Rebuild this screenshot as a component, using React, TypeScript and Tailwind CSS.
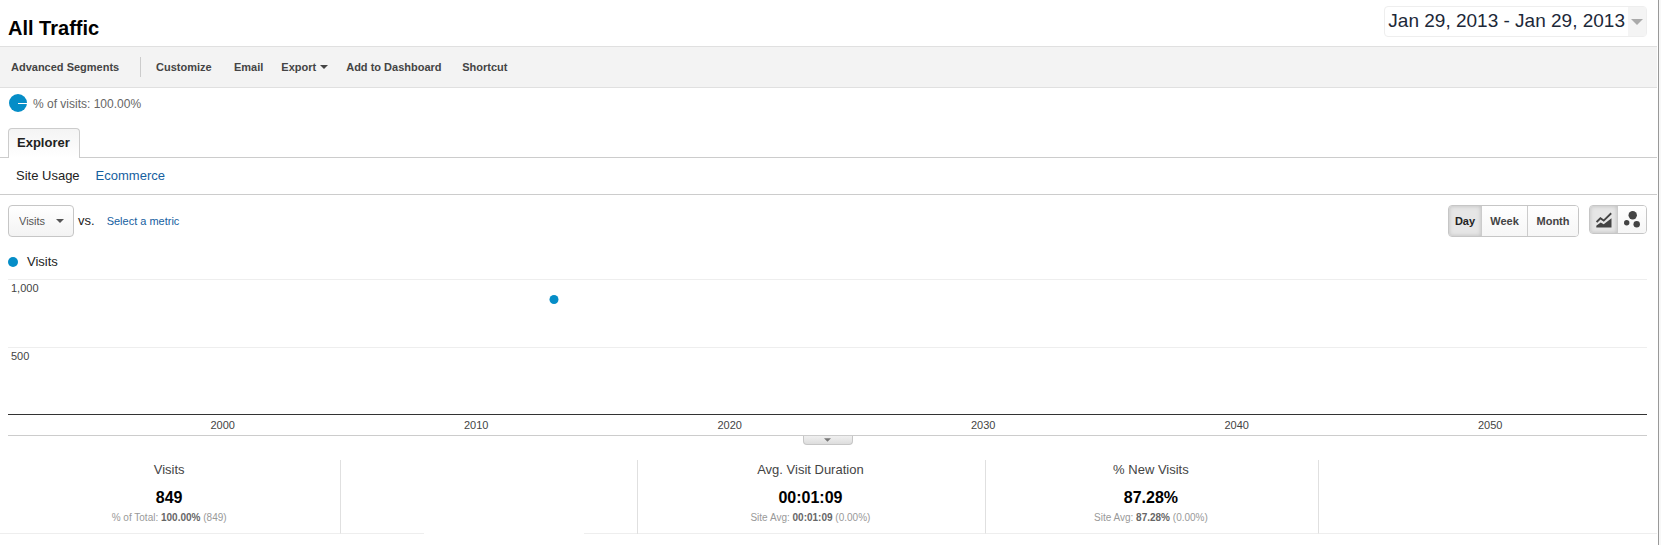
import React, { useState } from 'react';

interface Metric {
  label: string;
  value: string;
  prefix: string;
  average: string;
  suffix: string;
}

const YEARS = [2000, 2010, 2020, 2030, 2040, 2050];
const AXIS_MAX = 1000;
const POINT = { position: 33.3, visits: 849 };

const VISITS: Metric = { label: 'Visits', value: '849', prefix: '% of Total:', average: '100.00%', suffix: '(849)' };
const DURATION: Metric = { label: 'Avg. Visit Duration', value: '00:01:09', prefix: 'Site Avg:', average: '00:01:09', suffix: '(0.00%)' };
const NEW_VISITS: Metric = { label: '% New Visits', value: '87.28%', prefix: 'Site Avg:', average: '87.28%', suffix: '(0.00%)' };

const Caret: React.FC<{ className?: string }> = ({ className }) => (
  <svg viewBox="0 0 8 4" className={className} aria-hidden="true">
    <path d="M0 0h8L4 4z" fill="currentColor" />
  </svg>
);

const MetricSummary: React.FC<{ metric: Metric }> = ({ metric }) => (
  <div className="pr-0.5 text-center">
    <div className="text-[13px] leading-5 text-[#444]">{metric.label}</div>
    <div className="mt-2 text-base leading-5 font-bold text-black">{metric.value}</div>
    <div className="mt-1 text-[10px] leading-3 text-[#999]">
      {metric.prefix} <b className="text-[#666]">{metric.average}</b> {metric.suffix}
    </div>
  </div>
);

const Header: React.FC = () => (
  <header className="flex h-[46px] items-start justify-between pr-2.5 pl-2">
    <h1 className="pt-4 text-xl leading-6 font-bold text-black">All Traffic</h1>
    <button type="button" className="mt-1.5 flex h-[31px] items-stretch rounded border border-[#eee] pl-[3px] text-[19px] leading-7 text-[#1c2838]">
      <span>Jan 29, 2013 - Jan 29, 2013</span>
      <span className="ml-[3px] flex w-[18px] items-center justify-center bg-[#f4f4f4] text-[#aaa]">
        <Caret className="h-1.5 w-3" />
      </span>
    </button>
  </header>
);

const Toolbar: React.FC = () => (
  <nav className="flex h-[42px] items-center border-y border-[#e0e0e0] bg-[#f3f3f3] pl-[11px] text-[11px] font-bold text-[#444]">
    <button type="button" className="w-[114px] text-left">Advanced Segments</button>
    <span className="mx-[15px] h-5 w-px bg-[#ccc]" />
    <button type="button" className="w-[60px] text-left">Customize</button>
    <button type="button" className="ml-[18px]">Email</button>
    <button type="button" className="ml-[18px] flex items-center gap-1">
      Export
      <Caret className="h-1 w-2" />
    </button>
    <button type="button" className="ml-[18px] w-[98px] text-left">Add to Dashboard</button>
    <button type="button" className="ml-[18px]">Shortcut</button>
  </nav>
);

const App: React.FC = () => {
  const [metric, setMetric] = useState('visits');
  const [period, setPeriod] = useState('Day');

  const periodClass = (name: string) =>
    period === name
      ? 'bg-[#e6e6e6] text-[#222] shadow-[inset_0_0_4px_#bbb]'
      : 'bg-linear-to-b from-white to-[#f6f6f6] text-[#444]';

  return (
    <div className="flex min-h-screen bg-white font-['Liberation_Sans',Arial,sans-serif]">
      <main className="min-w-0 flex-1">
        <Header />
        <Toolbar />

        <div className="flex h-10 items-start gap-[6px] pt-1.5 pl-[9px] text-xs leading-5 text-[#666]">
          <svg viewBox="0 0 18 18" className="h-[18px] w-[18px]" aria-hidden="true">
            <circle cx="9" cy="9" r="9" fill="#058dc7" />
            <path d="M9 9.5h9" stroke="#fff" />
          </svg>
          <span>% of visits: 100.00%</span>
        </div>

        <div className="flex border-b border-[#ccc] pl-2">
          <a href="#explorer" className="-mb-px h-[30px] rounded-t-sm border border-b-0 border-[#ccc] bg-linear-to-b from-[#f4f4f4] to-white pr-[9px] pl-2 text-[13px] leading-7 font-bold text-[#222]">
            Explorer
          </a>
        </div>
        <nav className="flex h-[37px] gap-4 border-b border-[#ccc] pl-4 text-[13px] leading-9">
          <a href="#usage" className="text-[#222]">Site Usage</a>
          <a href="#ecommerce" className="text-[#15609f]">Ecommerce</a>
        </nav>

        <section className="pt-2.5 pr-2.5 pl-2">
          <div className="flex items-start justify-between">
            <div className="flex h-8 items-center">
              <div className="relative h-8">
                <select
                  aria-label="Primary metric"
                  value={metric}
                  onChange={e => setMetric(e.target.value)}
                  className="h-8 w-[66px] appearance-none rounded-sm border border-[#c6c6c6] bg-linear-to-b from-white to-[#f3f3f3] pl-2.5 text-[11px] text-[#555]"
                >
                  <option value="visits">Visits</option>
                </select>
                <Caret className="pointer-events-none absolute top-3.5 right-2.5 h-1 w-2 text-[#555]" />
              </div>
              <span className="ml-1 text-[13px] leading-4 text-[#222]">vs.</span>
              <a href="#metric" className="ml-3 text-[11px] leading-4 text-[#15609f]">Select a metric</a>
            </div>

            <div className="flex items-start gap-2.5">
              <div className="flex h-8 divide-x divide-[#ccc] overflow-hidden rounded-sm border border-[#c6c6c6] text-[11px] font-bold">
                <button type="button" onClick={() => setPeriod('Day')} className={`w-[33px] ${periodClass('Day')}`}>Day</button>
                <button type="button" onClick={() => setPeriod('Week')} className={`w-[46px] ${periodClass('Week')}`}>Week</button>
                <button type="button" onClick={() => setPeriod('Month')} className={`w-[50px] ${periodClass('Month')}`}>Month</button>
              </div>
              <div className="flex h-[29px] overflow-hidden rounded-sm border border-[#c6c6c6] text-[#444]">
                <button type="button" aria-label="Line chart" className="flex w-7 items-center justify-center border-r border-[#ccc] bg-[#e6e6e6] shadow-[inset_0_0_4px_#bbb]">
                  <svg viewBox="0 0 16 16" className="h-4 w-4" aria-hidden="true">
                    <path d="M.3 15.500v-1.700l4.400-3.400 3 1.900 7.800-6v9.200z" fill="currentColor" />
                    <path d="M.6 10 4.400 6.300l3.300 2.300L15.200 1.200" fill="none" stroke="currentColor" strokeWidth="1.900" />
                  </svg>
                </button>
                <button type="button" aria-label="Motion chart" className="flex w-7 items-center justify-center bg-linear-to-b from-white to-[#f6f6f6]">
                  <svg viewBox="0 0 16 17" className="h-[17px] w-4" aria-hidden="true">
                    <circle cx="8.700" cy="4.200" r="4.200" fill="currentColor" />
                    <circle cx="2.700" cy="11.800" r="2.700" fill="currentColor" />
                    <circle cx="12.700" cy="13.300" r="3.200" fill="currentColor" />
                  </svg>
                </button>
              </div>
            </div>
          </div>

          <div className="mt-4 mb-2 flex items-center gap-[9px] text-[13px] leading-[18px] text-[#222]">
            <span className="h-2.5 w-2.5 rounded-full bg-[#058dc7]" />
            Visits
          </div>

          {/* plot area */}
          <div className="relative text-[11px] leading-4 text-[#444]">
            <div className="h-[68px] border-t border-[#eee] pl-[3px]">1,000</div>
            <div className="h-[67px] border-t border-[#eee] pl-[3px]">500</div>
            <span
              className="absolute -mb-[5px] h-[9px] w-[9px] -translate-x-1/2 rounded-full bg-[#058dc7]"
              style={{ left: `${POINT.position}%`, bottom: `${(POINT.visits / AXIS_MAX) * 100}%` }}
            />
          </div>
          <div className="flex h-[21px] border-t border-[#333] pr-[30px] pl-[88px] text-[11px] leading-5 text-[#444]">
            {YEARS.map(year => (
              <span key={year} className="flex-1 text-center">{year}</span>
            ))}
          </div>
          <div className="flex h-[25px] items-start justify-center border-t border-[#ccc]">
            <button type="button" aria-label="Expand chart" className="flex h-[9px] w-[50px] items-center justify-center rounded-b-sm border border-t-0 border-[#c6c6c6] bg-linear-to-b from-[#f0f0f0] to-[#ddd] text-[#777]">
              <Caret className="h-1 w-[7px]" />
            </button>
          </div>
        </section>

        <section className="flex h-[74px]">
          <div className="w-[20.6%] border-r border-b border-[#e0e0e0] border-b-[#eee]">
            <MetricSummary metric={VISITS} />
          </div>
          <div className="flex w-[17.9%] justify-between border-r border-[#e0e0e0]">
            <span className="w-[28%] border-b border-[#eee]" />
            <span className="w-[18%] border-b border-[#eee]" />
          </div>
          <div className="w-[21%] border-r border-b border-[#e0e0e0] border-b-[#eee]">
            <MetricSummary metric={DURATION} />
          </div>
          <div className="w-[20.1%] border-r border-b border-[#e0e0e0] border-b-[#eee]">
            <MetricSummary metric={NEW_VISITS} />
          </div>
          <div className="flex-1 border-b border-[#eee]" />
        </section>
      </main>
      <div className="ml-px w-[3px] border-l border-[#999] bg-[#f8f8f8]" />
    </div>
  );
};

export default App;
